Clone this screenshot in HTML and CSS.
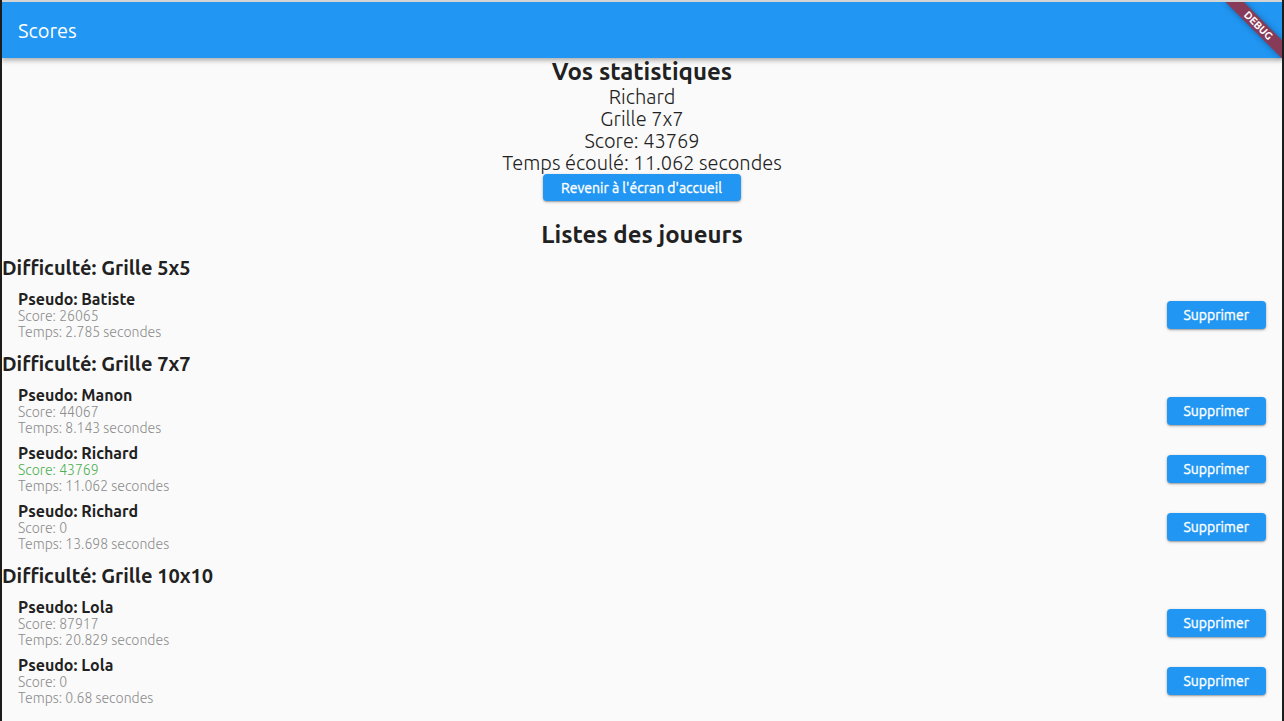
FILE: index.html
```html
<!DOCTYPE html>
<html lang="fr">
<head>
<meta charset="utf-8">
<title>Scores</title>
<link rel="stylesheet" href="styles.css">
</head>
<body>
<div class="topline"></div>
<div class="window">
  <header class="appbar">Scores</header>
  <div class="banner">DEBUG</div>
  <main class="content">
    <section class="stats">
      <h1 class="title">Vos statistiques</h1>
      <div class="stat">Richard</div>
      <div class="stat">Grille 7x7</div>
      <div class="stat">Score: 43769</div>
      <div class="stat">Temps écoulé: 11.062 secondes</div>
      <button class="btn btn-home">Revenir à l'écran d'accueil</button>
      <h2 class="title list-title">Listes des joueurs</h2>
    </section>

    <h3 class="group">Difficulté: Grille 5x5</h3>
    <div class="entry">
      <div class="info">
        <div class="pseudo">Pseudo: Batiste</div>
        <div class="sub">Score: 26065</div>
        <div class="sub">Temps: 2.785 secondes</div>
      </div>
      <button class="btn">Supprimer</button>
    </div>

    <h3 class="group">Difficulté: Grille 7x7</h3>
    <div class="entry">
      <div class="info">
        <div class="pseudo">Pseudo: Manon</div>
        <div class="sub">Score: 44067</div>
        <div class="sub">Temps: 8.143 secondes</div>
      </div>
      <button class="btn">Supprimer</button>
    </div>
    <div class="entry">
      <div class="info">
        <div class="pseudo">Pseudo: Richard</div>
        <div class="sub sub-current">Score: 43769</div>
        <div class="sub">Temps: 11.062 secondes</div>
      </div>
      <button class="btn">Supprimer</button>
    </div>
    <div class="entry">
      <div class="info">
        <div class="pseudo">Pseudo: Richard</div>
        <div class="sub">Score: 0</div>
        <div class="sub">Temps: 13.698 secondes</div>
      </div>
      <button class="btn">Supprimer</button>
    </div>

    <h3 class="group">Difficulté: Grille 10x10</h3>
    <div class="entry">
      <div class="info">
        <div class="pseudo">Pseudo: Lola</div>
        <div class="sub">Score: 87917</div>
        <div class="sub">Temps: 20.829 secondes</div>
      </div>
      <button class="btn">Supprimer</button>
    </div>
    <div class="entry">
      <div class="info">
        <div class="pseudo">Pseudo: Lola</div>
        <div class="sub">Score: 0</div>
        <div class="sub">Temps: 0.68 secondes</div>
      </div>
      <button class="btn">Supprimer</button>
    </div>
  </main>
</div>
</body>
</html>
```

FILE: styles.css
```css
* { box-sizing: border-box; }

html, body {
  margin: 0;
  padding: 0;
  height: 721px;
  overflow: hidden;
  background: #1c1c1c;
  font-family: "Ubuntu", "Roboto", "Noto Sans", sans-serif;
}

.topline {
  height: 2px;
  background: #d4d4d4;
  margin: 0 2px;
}

.window {
  position: relative;
  margin: 0 2px;
  height: 719px;
  background: #fafafa;
  overflow: hidden;
  color: #212121;
}

.appbar {
  position: relative;
  z-index: 2;
  height: 56px;
  background: #2196f3;
  color: #ffffff;
  font-size: 20px;
  font-weight: 400;
  display: flex;
  align-items: center;
  padding-left: 16px;
  box-shadow: 0 2px 4px rgba(0, 0, 0, 0.22), 0 4px 5px rgba(0, 0, 0, 0.1);
}

.banner {
  position: absolute;
  z-index: 5;
  left: calc(100% - 40px);
  top: 27px;
  width: 80px;
  height: 13px;
  transform-origin: 40px -27px;
  transform: rotate(45deg);
  background: rgba(168, 30, 40, 0.76);
  color: #ffffff;
  font-family: "Ubuntu", "DejaVu Sans", sans-serif;
  font-size: 10.5px;
  font-weight: 700;
  line-height: 13px;
  text-align: center;
  box-shadow: 0 0 6px rgba(0, 0, 0, 0.35);
}

.content {
  display: flex;
  flex-direction: column;
}

.stats {
  display: flex;
  flex-direction: column;
  align-items: center;
  text-align: center;
}

.title {
  margin: 0;
  font-size: 24px;
  line-height: 28px;
  font-weight: 700;
}

.stat {
  font-size: 20px;
  line-height: 22px;
  font-weight: 300;
}

.list-title {
  margin-top: 20px;
}

.btn {
  border: none;
  background: #2196f3;
  color: #ffffff;
  font-family: inherit;
  font-size: 14px;
  font-weight: 400;
  -webkit-text-stroke: 0.35px #ffffff;
  height: 28px;
  padding: 0 17px 0 16px;
  border-radius: 4px;
  box-shadow: 0 1px 3px rgba(0, 0, 0, 0.3), 0 1px 1px rgba(0, 0, 0, 0.14);
  cursor: pointer;
}

.btn-home {
  height: 27px;
  padding: 0 19px 0 18px;
}

.group {
  margin: 0;
  height: 38px;
  line-height: 37px;
  font-size: 20px;
  font-weight: 700;
  padding-left: 0;
}

.entry {
  display: flex;
  align-items: center;
  justify-content: space-between;
  height: 58px;
  padding: 0 16px 2px;
}

.info {
  display: flex;
  flex-direction: column;
}

.pseudo {
  font-size: 16px;
  line-height: 18px;
  font-weight: 700;
}

.sub {
  font-size: 14px;
  line-height: 16px;
  font-weight: 300;
  color: #8c8c8c;
}

.sub-current {
  color: #4caf50;
}
```
